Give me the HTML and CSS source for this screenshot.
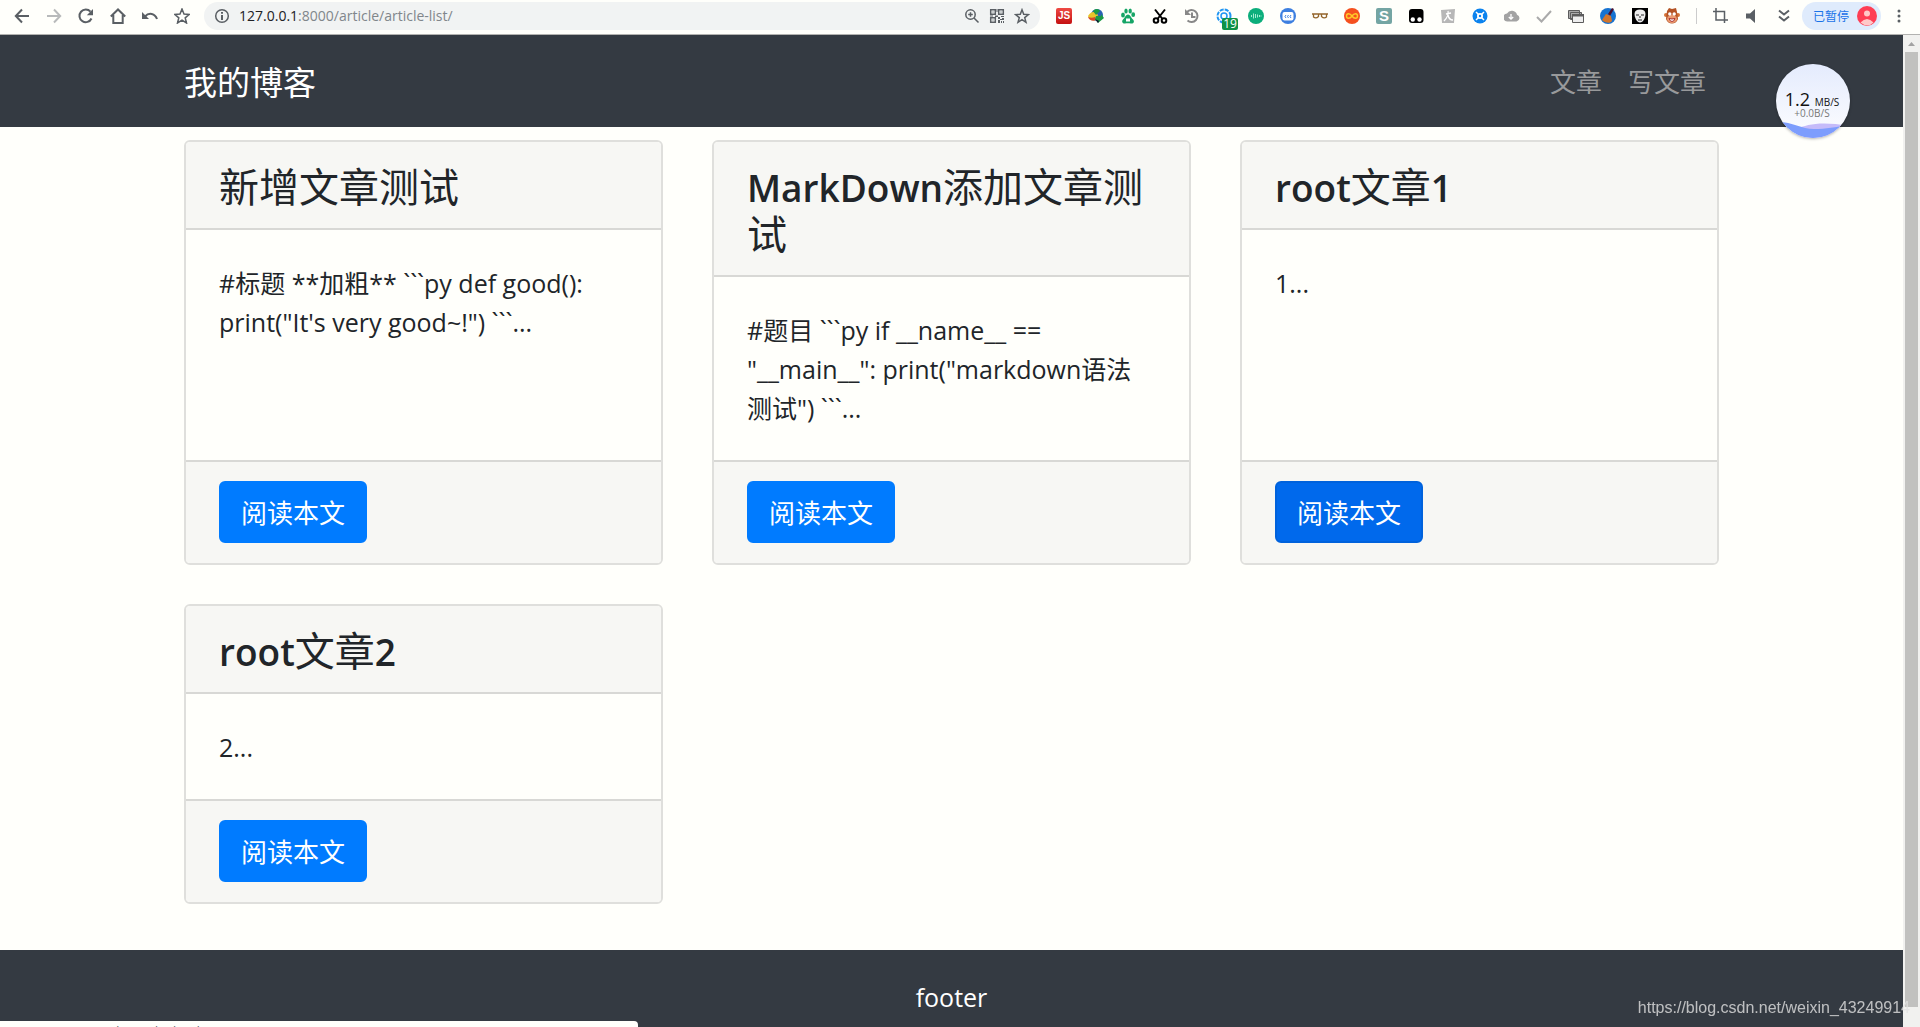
FILE: index.html
```html
<!DOCTYPE html>
<html lang="zh-CN">
<head>
<meta charset="utf-8">
<title>我的博客</title>
<meta name="viewport" content="width=device-width, initial-scale=1">
<link rel="stylesheet" href="styles.css">
</head>
<body>
<header class="toolbar">
  <div class="tools tools-nav">
    <button class="tool" aria-label="后退"><svg viewBox="0 0 16 16"><path class="line" d="M15 8H2M8 1.5 1.8 8 8 14.500"/></svg></button>
    <button class="tool faint" aria-label="前进"><svg viewBox="0 0 16 16"><path class="line" d="M1 8h13M8 1.500 14.200 8 8 14.500"/></svg></button>
    <button class="tool" aria-label="刷新"><svg viewBox="0 0 16 16"><path class="line" d="M13.500 10.500A6.300 6.300 0 1 1 12.500 3.700"/><path class="solid" d="M15 1v6.200H8.800z"/></svg></button>
    <button class="tool" aria-label="主页"><svg viewBox="0 0 16 16"><path class="line" d="M.8 8.500 8 1.500l7.200 7M3.300 7v8h9.400V7"/></svg></button>
    <button class="tool" aria-label="撤销"><svg viewBox="0 0 16 16"><path class="line" d="M3 8.500C7 4 13 5.500 15 11"/><path class="solid" d="M0 4v7h7z"/></svg></button>
    <button class="tool" aria-label="收藏"><svg viewBox="0 0 16 16"><path class="line thin" d="m8 1 2 5 5.300.4-4.100 3.400 1.300 5.200L8 12.200 3.500 15l1.300-5.200L.7 6.400 6 6z"/></svg></button>
  </div>
  <div class="omnibox">
    <svg class="glyph" viewBox="0 0 16 16"><circle class="line thin" cx="8" cy="8" r="6.300"/><path class="line" d="M8 7v5M8 4v1.700"/></svg>
    <label class="host" for="url">127.0.0.1</label><input id="url" class="url" type="text" value=":8000/article/article-list/">
    <button class="tool tight" aria-label="缩放"><svg viewBox="0 0 16 16"><circle class="line thin" cx="6.500" cy="6.500" r="4.700"/><path class="line thin" d="m10 10 4.500 4.500M4.200 6.500h4.600M6.500 4.200v4.600"/></svg></button>
    <button class="tool tight" aria-label="二维码"><svg viewBox="0 0 16 16"><path class="line thin" d="M1.700 1.700h4.600v4.600H1.700zM9.700 1.700h4.600v4.600H9.700zM1.700 9.700h4.600v4.600H1.700z"/><path class="solid" d="M3.500 3.500h1v1h-1zM11.500 3.500h1v1h-1zM3.500 11.500h1v1h-1zM7.500 1h1v3h-1zM1 7.500h3v1H1zM6 7.500h3v1.500H6zM9 9h2v2H9zM12 8h3v1h-3zM11 11h2v1h-2zM13 10h2v2h-2zM9 12h2v3H9zM12 13h1v2h-1zM14 13h1v2h-1z"/></svg></button>
    <button class="tool tight" aria-label="书签"><svg viewBox="0 0 16 16"><path class="line thin" d="m8 1.800 1.700 4.500 4.800.3-3.800 3 1.300 4.700L8 11.700l-4 2.600 1.300-4.700-3.800-3 4.800-.3z"/></svg></button>
  </div>
  <div class="tools tools-ext">
    <button class="tool" aria-label="JS"><span class="js">JS</span></button>
    <button class="tool" aria-label="下载器"><svg viewBox="0 0 16 16"><circle cx="9" cy="7" r="6" fill="#2a62b5"/><path fill="#e8c52b" d="M0 8c3-5 7-5 10-1l-2 5C4 13 1 12 0 8z"/><path fill="#d5492c" d="M0 9c2 1 5 1 7 0l1 3C5 14 1 12 0 9z"/><path fill="#1b9a46" d="M5 3c3-3 6-2 7 0l-4 4zM8 8h5v-2l3 4-6 5-3-4z"/><path fill="#113" d="m7 11 3 4 1-2z"/></svg></button>
    <button class="tool" aria-label="百度"><svg viewBox="0 0 16 16" fill="#16a566"><ellipse cx="3" cy="7" rx="1.900" ry="2.500"/><ellipse cx="6" cy="3" rx="1.700" ry="2.500"/><ellipse cx="10.200" cy="3" rx="1.700" ry="2.500"/><ellipse cx="13.200" cy="6.700" rx="1.900" ry="2.400"/><path d="M8 6.500c2 0 3 3 5 5s.5 4.500-2 4-4-.5-6 0-4-2-2-4 3-5 5-5z"/><path fill="#fff" d="M6 10.500h4v3H6z"/></svg></button>
    <button class="tool" aria-label="截图"><svg viewBox="0 0 16 16" fill="none" stroke="#000" stroke-width="2"><circle cx="4" cy="12.500" r="2.300"/><circle cx="12" cy="12.500" r="2.300"/><path d="M3 1.500 10.500 11M13 1.500 5.500 11"/></svg></button>
    <button class="tool" aria-label="历史"><svg viewBox="0 0 16 16" fill="none" stroke="#888" stroke-width="2"><path d="M3 4a6 6 0 1 1 .5 8.500M8 4.500V9h3.500"/><path fill="#888" stroke="none" d="M1 1v6h6z"/></svg></button>
    <button class="tool" aria-label="设置"><svg viewBox="0 0 16 16" fill="none" stroke="#2196f3"><circle cx="8" cy="8" r="6.500" stroke-width="2" stroke-dasharray="4 1.100"/><circle cx="8" cy="8" r="3" stroke-width="1.500"/></svg><span class="badge">19</span></button>
    <button class="tool" aria-label="音频"><svg viewBox="0 0 16 16"><circle cx="8" cy="8" r="8" fill="#0cae7b"/><path stroke="#a5ecd2" d="M3.500 7v2M5.500 5.500v5M7.500 6v4M9.500 6.500v3M11.500 7v2M13 7.500v1"/></svg></button>
    <button class="tool" aria-label="视频"><svg viewBox="0 0 16 16"><circle cx="8" cy="8" r="8" fill="#3d7fe0"/><rect x="2.500" y="4" width="11" height="8.500" rx="2" fill="#fff"/><path fill="none" stroke="#3d7fe0" d="m6 7-1 1.500L6 10M8.500 7l-1 1.500 1 1.500M11 7l-1 1.500 1 1.500"/></svg></button>
    <button class="tool" aria-label="眼镜"><svg viewBox="0 0 16 16" fill="none" stroke="#94662c" stroke-width="1.300"><path d="M0 6h16M1.500 6v3q2.500 2 5-.5V6M9.500 6v2.500q2.500 2.500 5 .5V6"/></svg></button>
    <button class="tool" aria-label="循环"><svg viewBox="0 0 16 16"><circle cx="8" cy="8" r="8" fill="#f5501e"/><path fill="none" stroke="#ffc928" stroke-width="1.500" d="M8 8c-2-3-5.500-3-5.500 0S6 11 8 8s5.500-3 5.500 0S10 11 8 8z"/></svg></button>
    <button class="tool" aria-label="S"><span class="letter">S</span></button>
    <button class="tool" aria-label="脚本"><svg viewBox="0 0 16 16"><rect x="1" y="1" width="14.500" height="14" rx="3"/><circle cx="4.800" cy="11.500" r="2.200" fill="#fff"/><circle cx="11.500" cy="11.500" r="2.200" fill="#fff"/></svg></button>
    <button class="tool" aria-label="人形"><svg viewBox="0 0 16 16"><path fill="#b7b7b7" d="m1 2 14-1-1 14H2z"/><path fill="none" stroke="#fff" stroke-width="1.300" d="M8 3q1 5-4 10M8 7q1 5 5 5M6 6l5-1"/></svg></button>
    <button class="tool" aria-label="无人机"><svg viewBox="0 0 16 16"><circle cx="8" cy="8" r="7.500" fill="#0c83ee"/><path stroke="#fff" stroke-width="1.500" d="m4 4 8 8M12 4l-8 8"/><circle cx="8" cy="8" r="3" fill="#fff"/><circle cx="8" cy="8" r="1.200" fill="#0c83ee"/></svg></button>
    <button class="tool" aria-label="云下载"><svg viewBox="0 0 16 16"><path fill="#a3a3a3" d="M4 13.500a4 4 0 0 1-1-8 5.500 5.500 0 0 1 10 1.200 3.500 3.500 0 0 1-.5 6.800z"/><path fill="none" stroke="#fff" stroke-width="1.300" d="M7 6v5M4.800 9 7 11.200 9.200 9"/></svg></button>
    <button class="tool" aria-label="完成"><svg viewBox="0 0 16 16"><path fill="none" stroke="#aaa" stroke-width="2" d="m1 9 4.500 4.500L15 3"/></svg></button>
    <button class="tool" aria-label="窗口"><svg viewBox="0 0 16 16"><path fill="#aaa" stroke="#5c5c5c" d="M.5 2.500h11v8H.5zM2.500 4.500h11v7h-11z"/><path fill="#eee" stroke="#5c5c5c" d="M4.500 6.500h11v8h-11z"/><path fill="#5c5c5c" d="M4 6h12v2.500H4z"/></svg></button>
    <button class="tool" aria-label="清理"><svg viewBox="0 0 16 16"><circle cx="8" cy="8" r="8" fill="#1673d1"/><path fill="#413" d="M12 0 14 1 10 8 8 6z"/><path fill="#d2762c" d="m6 6 5 2 1 5c-2 3-7 2-10-1z"/></svg></button>
    <button class="tool" aria-label="面具"><svg viewBox="0 0 16 16"><path d="M0 0h16v16H0z"/><path fill="#eee" d="M8 1.500c7 0 6 6 4 10s-6 4-8 0-3-10 4-10z"/><path stroke="#222" d="M4 7h3M9 7h3M6 12h4M8 8v2"/></svg></button>
    <button class="tool" aria-label="猴子"><svg viewBox="0 0 16 16"><circle cx="2" cy="7" r="2" fill="#d67438"/><circle cx="14" cy="7" r="2" fill="#d67438"/><path fill="#b45325" d="M3 3 5 0l3 1 4-1 1 4 1 7c-2 6-10 6-12 0z"/><ellipse cx="8" cy="11" rx="5" ry="4" fill="#ec9b70"/><circle cx="5.800" cy="6" r="1.700" fill="#fff"/><circle cx="10.200" cy="6" r="1.700" fill="#fff"/><path fill="#fff" stroke="#a33" d="M5 10.500q3 1 6 0-1 3-3 3t-3-3z"/></svg></button>
  </div>
  <div class="tools tools-end">
    <button class="tool" aria-label="裁剪"><svg viewBox="0 0 16 16"><path class="line thin" d="M4 0v12h12M1 3.500h11.500V15"/></svg></button>
    <button class="tool" aria-label="声音"><svg viewBox="0 0 16 16"><path class="solid" d="M2 5.500h4l5-4.500v14l-5-4.500H2z"/></svg></button>
    <button class="tool" aria-label="更多扩展"><svg viewBox="0 0 16 16"><path class="line" d="m3 2.500 5 4 5-4M3 8.500l5 4 5-4"/></svg></button>
  </div>
  <button class="profile">已暂停<svg viewBox="0 0 20 20"><circle cx="10" cy="10" r="10" fill="#fe3d54"/><circle cx="10" cy="7.500" r="3" fill="#ffc8c8"/><path fill="#ffc8c8" d="M3.500 16.500q6.500-7 13 0-6 6-13 0z"/></svg></button>
  <button class="tool menu" aria-label="菜单"><svg viewBox="0 0 16 16"><circle class="solid" cx="8" cy="3" r="1.500"/><circle class="solid" cx="8" cy="8" r="1.500"/><circle class="solid" cx="8" cy="13" r="1.500"/></svg></button>
</header>
<div class="view">
  <div class="page">
    <nav class="navbar">
      <div class="container nav-row">
        <a class="brand" href="#">我的博客</a>
        <a class="nav-link" href="#">文章</a>
        <a class="nav-link" href="#">写文章</a>
      </div>
    </nav>
    <main class="container cards">
      <article class="card">
        <h4 class="card-head">新增文章测试</h4>
        <p class="card-body">#标题 **加粗** ```py def good(): print("It's very good~!") ```...</p>
        <div class="card-foot"><a class="btn" href="#">阅读本文</a></div>
      </article>
      <article class="card">
        <h4 class="card-head"><span class="latin">MarkDown</span>添加文章测试</h4>
        <p class="card-body">#题目 ```py if __name__ == "__main__": print("markdown语法测试") ```...</p>
        <div class="card-foot"><a class="btn" href="#">阅读本文</a></div>
      </article>
      <article class="card">
        <h4 class="card-head"><span class="latin">root</span>文章<span class="latin">1</span></h4>
        <p class="card-body">1...</p>
        <div class="card-foot"><a class="btn btn-hover" href="#">阅读本文</a></div>
      </article>
      <article class="card">
        <h4 class="card-head"><span class="latin">root</span>文章<span class="latin">2</span></h4>
        <p class="card-body">2...</p>
        <div class="card-foot"><a class="btn" href="#">阅读本文</a></div>
      </article>
    </main>
    <footer class="footer">footer</footer>
  </div>
  <div class="scrollbar">
    <svg class="arrow" viewBox="0 0 17 17"><path d="M5 11h7L8.500 7z" fill="#a3a3a3"/></svg>
    <div class="thumb"></div>
  </div>
</div>
<div class="meter">
  <svg class="wave" viewBox="0 0 74 74"><path fill="#c5bbfa" d="M20 65C32 60 45 57 74 62v12H20z"/><path fill="#7d9dfd" d="M0 58c15-1 25 7 38 7s20-2 36-4v13H0z"/></svg>
  <div class="rate">1.2 <small>MB/S</small></div>
  <div class="rate-up">+0.0B/S</div>
</div>
<div class="status">127.0.0.1:8000/article/article-detail/3</div>
<div class="watermark">https://blog.csdn.net/weixin_43249914</div>
</body>
</html>
```
FILE: styles.css
```css
* { box-sizing: border-box; }

body {
  margin: 0;
  min-height: 100vh;
  display: flex;
  flex-direction: column;
  background: #fffffb;
  color: #212529;
  font: 26px/39px "Open Sans", "Noto Sans CJK SC", sans-serif;
}

a { text-decoration: none; }
button { font-family: inherit; }

/* Browser toolbar */
.toolbar {
  display: flex;
  align-items: center;
  height: 35px;
  padding: 0 14px 3px;
  border-bottom: 1px solid #b2b2b0;
}
.tools { display: flex; gap: 16px; }
.tool {
  position: relative;
  flex: none;
  width: 16px;
  height: 16px;
  padding: 0;
  border: 0;
  background: none;
  color: #5a5f64;
}
.tool svg, .glyph { display: block; width: 16px; height: 16px; flex: none; }
.faint { color: #b8babb; }
.line { fill: none; stroke: currentColor; stroke-width: 2; }
.thin { stroke-width: 1.5; }
.solid { fill: currentColor; }

.omnibox {
  flex: 1;
  display: flex;
  align-items: center;
  height: 28px;
  margin: 0 16px 0 14px;
  padding: 0 10px;
  border-radius: 14px;
  background: #f1f3f3;
  color: #5a5f64;
  font-size: 14px;
  line-height: 20px;
}
.host { margin-left: 9px; color: #202124; }
.url {
  flex: 1;
  min-width: 0;
  padding: 0;
  border: 0;
  background: none;
  color: #80868b;
  font: inherit;
}
.tight { margin-left: 9px; }

.js {
  display: block;
  border-radius: 2px;
  background: linear-gradient(#ef4a43, #c4100f);
  color: #fff;
  font: bold 10px/16px "Liberation Sans", sans-serif;
}
.letter {
  display: block;
  border-radius: 2px;
  background: #74a5a3;
  color: #fff;
  font: bold 15px/16px "Liberation Sans", sans-serif;
}
.badge {
  position: absolute;
  left: 6px;
  top: 10px;
  width: 16px;
  height: 12px;
  border-radius: 2px;
  background: #0f9246;
  color: #fff;
  font-size: 12px;
  line-height: 12px;
}
.tools-end {
  margin-left: 16px;
  padding-left: 15px;
  border-left: 1px solid #ccc;
}
.profile {
  display: flex;
  align-items: center;
  justify-content: space-between;
  width: 79px;
  height: 28px;
  margin: 0 10px;
  padding: 0 4px 0 11px;
  border: 0;
  border-radius: 14px;
  background: #dfebfc;
  color: #1a73e8;
  font-size: 12px;
}
.profile svg { width: 20px; height: 20px; }
.menu { margin-right: -1px; }

/* Page viewport */
.view { flex: 1; display: flex; }
.page { flex: 1; display: flex; flex-direction: column; }
.container { width: 100%; max-width: 1535px; margin: 0 auto; }

.navbar { padding: 14px 0 12px; background: #343a42; }
.nav-row { display: flex; align-items: center; min-height: 66px; }
.brand { margin-right: auto; color: #fff; font-size: 33px; }
.nav-link { padding: 0 13px; color: #98999b; }

.cards {
  display: grid;
  grid-template-columns: repeat(3, 1fr);
  gap: 39px 49px;
  padding: 13px 0 46px;
}
.card {
  display: flex;
  flex-direction: column;
  min-width: 0;
  overflow: hidden;
  border: 2px solid #dfdfdc;
  border-radius: 6px;
}
.card-head {
  margin: 0;
  padding: 21px 33px 18px;
  border-bottom: 2px solid #d8d8d5;
  background: #f7f7f4;
  font-size: 40px;
  font-weight: 400;
  line-height: 47px;
}
.latin { font-size: 37px; font-weight: 600; line-height: 1; }
.card-body { flex: 1; margin: 0; padding: 34px 33px 32px; font-size: 25px; }
.card-foot {
  padding: 19px 33px 20px;
  border-top: 2px solid #d8d8d5;
  background: #f7f7f4;
}
.btn {
  display: block;
  width: max-content;
  padding: 11px 20px 9px;
  border: 2px solid #007bff;
  border-radius: 6px;
  background: #007bff;
  color: #fff;
  line-height: 38px;
}
.btn-hover { background: #0069ec; border-color: #0062dc; }

.footer {
  flex: 1;
  padding: 28px 0 10px;
  background: #343a42;
  color: #fff;
  font-size: 25px;
  text-align: center;
}

.scrollbar {
  display: flex;
  flex-direction: column;
  width: 17px;
  padding-bottom: 20px;
  background: #f1f1ef;
}
.arrow { width: 17px; height: 17px; }
.thumb { flex: 1; margin: 0 2px; background: #c1c1bf; }

/* Overlays */
.meter {
  position: absolute;
  top: 64px;
  right: 70px;
  width: 74px;
  height: 74px;
  padding: 26px 2px 0 0;
  overflow: hidden;
  border-radius: 50%;
  background: linear-gradient(#e4ebfd, #fdfdff);
  box-shadow: 0 1px 3px rgba(0, 0, 0, .3);
  color: #111;
  text-align: center;
}
.wave { position: absolute; inset: 0; }
.rate { position: relative; font-size: 18px; line-height: 18px; }
.rate small { font-size: 10px; line-height: 1; }
.rate-up { position: relative; color: #777; font-size: 10px; line-height: 10px; }
.status {
  position: fixed;
  left: 0;
  bottom: 0;
  width: 638px;
  height: 6px;
  padding-left: 6px;
  overflow: hidden;
  border-radius: 0 4px 0 0;
  background: #fffffb;
  color: #5a5f64;
  font-size: 12px;
  line-height: 22px;
}
.watermark {
  position: fixed;
  right: 10px;
  bottom: 9px;
  color: rgba(225, 225, 225, .8);
  font: 16px/20px "Liberation Sans", Arial, sans-serif;
}
```
